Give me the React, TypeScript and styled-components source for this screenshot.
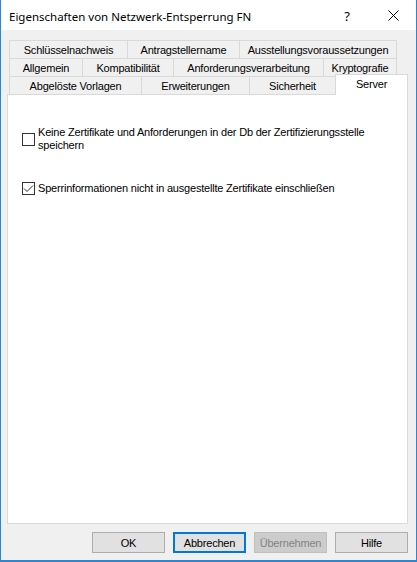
import styled, { createGlobalStyle } from 'styled-components'

const GlobalStyle = createGlobalStyle`
    html, body {
        margin: 0;
        padding: 0;
        background: #ffffff;
    }

    * {
        box-sizing: border-box;
    }
`

const Window = styled.div`
    width: 417px;
    height: 562px;
    display: flex;
    flex-direction: column;
    background: #f0f0f0;
    border: 1px solid #2b87d3;
    border-top: none;
    border-bottom-width: 2px;
    font-family: "Liberation Sans", Arial, sans-serif;
    font-size: 11px;
    letter-spacing: -0.2px;
    color: #000;
`

const TitleBar = styled.div`
    flex: none;
    height: 30px;
    display: flex;
    align-items: center;
    background: #ffffff;
    padding-left: 8px;
`

const Title = styled.div`
    flex: 1;
    font-family: "Noto Sans", sans-serif;
    font-size: 11.5px;
    letter-spacing: 0;
    padding-top: 2px;
`

const CaptionBtn = styled.div`
    width: 46px;
    height: 30px;
    display: flex;
    align-items: center;
    justify-content: center;
    font-family: "Noto Sans", sans-serif;
    font-size: 13px;
    padding-top: 1px;
`

const Body = styled.div`
    flex: 1;
    display: flex;
    flex-direction: column;
    padding: 10px 8px 7px 6px;
`

const TabStrip = styled.div`
    padding-left: 2px;
`

const TabRow = styled.div`
    display: flex;
    height: 18px;
`

const Tab = styled.div<{ $w: number; $active?: boolean }>`
    flex: none;
    width: ${(p) => p.$w}px;
    height: ${(p) => (p.$active ? 21 : 18)}px;
    margin-top: ${(p) => (p.$active ? -2 : 0)}px;
    display: flex;
    align-items: center;
    justify-content: center;
    padding-bottom: ${(p) => (p.$active ? 3 : 0)}px;
    background: ${(p) => (p.$active ? '#ffffff' : '#f0f0f0')};
    border: 1px solid #d9d9d9;
    border-bottom: none;
    white-space: nowrap;
    position: ${(p) => (p.$active ? 'relative' : 'static')};
    z-index: ${(p) => (p.$active ? 1 : 'auto')};

    & + & {
        margin-left: -1px;
    }
`

const Panel = styled.div`
    flex: none;
    height: 430px;
    background: #ffffff;
    border: 1px solid #d9d9d9;
    padding: 31px 14px 0;
    display: flex;
    flex-direction: column;
    gap: 30px;
`

const CheckRow = styled.label`
    display: flex;
    align-items: center;
    gap: 3px;
    line-height: 13px;
`

const Box = styled.span`
    flex: none;
    width: 13px;
    height: 13px;
    border: 1px solid #333333;
    background: #ffffff;
    display: flex;
    align-items: center;
    justify-content: center;
`

const LabelText = styled.span`
    max-width: 345px;
`

const ButtonRow = styled.div`
    margin-top: 8px;
    display: flex;
    justify-content: flex-end;
    gap: 8px;
`

const Button = styled.button<{ $default?: boolean }>`
    width: 73px;
    height: 21px;
    padding: 0;
    font-family: "Liberation Sans", Arial, sans-serif;
    font-size: 11px;
    letter-spacing: -0.2px;
    color: #000;
    background: #e1e1e1;
    border: ${(p) => (p.$default ? '2px solid #0078d7' : '1px solid #adadad')};

    &:disabled {
        color: #838383;
        background: #cccccc;
        border-color: #bfbfbf;
    }
`

const rows: { label: string; w: number; active?: boolean }[][] = [
    [
        { label: 'Schlüsselnachweis', w: 119 },
        { label: 'Antragstellername', w: 113 },
        { label: 'Ausstellungsvoraussetzungen', w: 158 },
    ],
    [
        { label: 'Allgemein', w: 74 },
        { label: 'Kompatibilität', w: 92 },
        { label: 'Anforderungsverarbeitung', w: 151 },
        { label: 'Kryptografie', w: 74 },
    ],
    [
        { label: 'Abgelöste Vorlagen', w: 133 },
        { label: 'Erweiterungen', w: 109 },
        { label: 'Sicherheit', w: 87 },
        { label: 'Server', w: 73, active: true },
    ],
]

const CheckBox = ({ checked }: { checked?: boolean }) => (
    <Box>
        {checked && (
            <svg width="11" height="11" viewBox="0 0 11 11">
                <polyline points="1,5.5 4,8.5 10,2.5" fill="none" stroke="#333" strokeWidth="1" />
            </svg>
        )}
    </Box>
)

const App = () => {
    return (
        <>
            <GlobalStyle />
            <Window>
                <TitleBar>
                    <Title>Eigenschaften von Netzwerk-Entsperrung FN</Title>
                    <CaptionBtn>?</CaptionBtn>
                    <CaptionBtn>
                        <svg width="11" height="11" viewBox="0 0 11 11">
                            <path d="M0.5 0.5 L10.5 10.5 M10.5 0.5 L0.5 10.5" stroke="#000" strokeWidth="1" />
                        </svg>
                    </CaptionBtn>
                </TitleBar>
                <Body>
                    <TabStrip>
                        {rows.map((row, i) => (
                            <TabRow key={i}>
                                {row.map((t) => (
                                    <Tab key={t.label} $w={t.w} $active={t.active}>
                                        {t.label}
                                    </Tab>
                                ))}
                            </TabRow>
                        ))}
                    </TabStrip>
                    <Panel>
                        <CheckRow>
                            <CheckBox />
                            <LabelText>
                                Keine Zertifikate und Anforderungen in der Db der Zertifizierungsstelle speichern
                            </LabelText>
                        </CheckRow>
                        <CheckRow>
                            <CheckBox checked />
                            <LabelText>Sperrinformationen nicht in ausgestellte Zertifikate einschließen</LabelText>
                        </CheckRow>
                    </Panel>
                    <ButtonRow>
                        <Button>OK</Button>
                        <Button $default>Abbrechen</Button>
                        <Button disabled>Übernehmen</Button>
                        <Button>Hilfe</Button>
                    </ButtonRow>
                </Body>
            </Window>
        </>
    )
}

export default App
